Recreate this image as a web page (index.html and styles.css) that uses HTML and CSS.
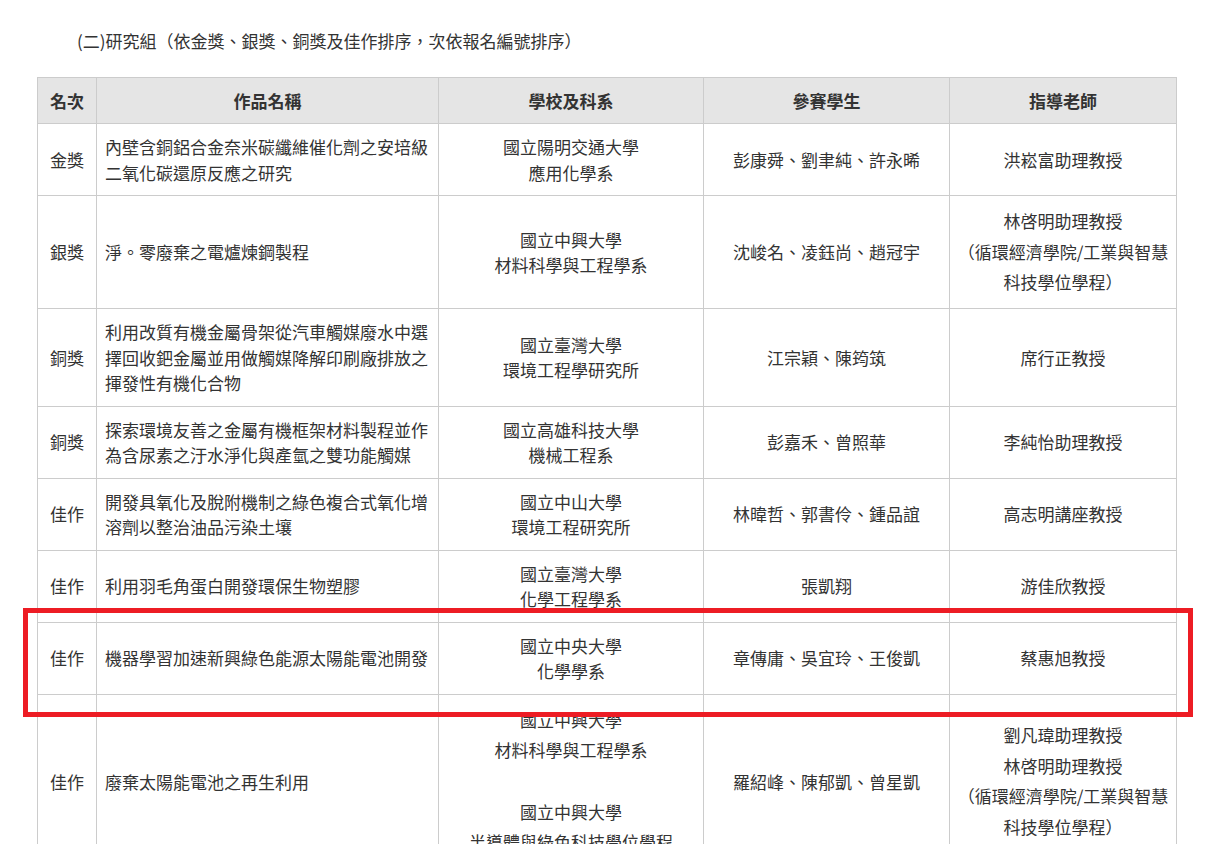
FILE: index.html
```html
<!DOCTYPE html>
<html lang="zh-Hant">
<head>
<meta charset="utf-8">
<title>研究組</title>
<link rel="stylesheet" href="styles.css">
</head>
<body>
<main class="page">
  <p class="caption">(二)研究組（依金獎、銀獎、銅獎及佳作排序，次依報名編號排序）</p>
  <div class="table-wrap">
    <table class="awards">
      <colgroup>
        <col class="c-rank"><col class="c-title"><col class="c-school"><col class="c-students"><col class="c-teacher">
      </colgroup>
      <thead>
        <tr><th>名次</th><th>作品名稱</th><th>學校及科系</th><th>參賽學生</th><th>指導老師</th></tr>
      </thead>
      <tbody>
        <tr>
          <td class="rank">金獎</td>
          <td class="title">內壁含銅鋁合金奈米碳纖維催化劑之安培級二氧化碳還原反應之研究</td>
          <td>國立陽明交通大學<br>應用化學系</td>
          <td>彭康舜、劉聿純、許永晞</td>
          <td>洪崧富助理教授</td>
        </tr>
        <tr>
          <td class="rank">銀獎</td>
          <td class="title">淨。零廢棄之電爐煉鋼製程</td>
          <td>國立中興大學<br>材料科學與工程學系</td>
          <td>沈峻名、凌鈺尚、趙冠宇</td>
          <td class="tall">林啓明助理教授<br>（循環經濟學院/工業與智慧<br>科技學位學程）</td>
        </tr>
        <tr>
          <td class="rank">銅獎</td>
          <td class="title">利用改質有機金屬骨架從汽車觸媒廢水中選擇回收鈀金屬並用做觸媒降解印刷廠排放之揮發性有機化合物</td>
          <td>國立臺灣大學<br>環境工程學研究所</td>
          <td>江宗穎、陳筠筑</td>
          <td>席行正教授</td>
        </tr>
        <tr>
          <td class="rank">銅獎</td>
          <td class="title">探索環境友善之金屬有機框架材料製程並作為含尿素之汙水淨化與產氫之雙功能觸媒</td>
          <td>國立高雄科技大學<br>機械工程系</td>
          <td>彭嘉禾、曾照華</td>
          <td>李純怡助理教授</td>
        </tr>
        <tr>
          <td class="rank">佳作</td>
          <td class="title">開發具氧化及脫附機制之綠色複合式氧化增溶劑以整治油品污染土壤</td>
          <td>國立中山大學<br>環境工程研究所</td>
          <td>林暐哲、郭書伶、鍾品誼</td>
          <td>高志明講座教授</td>
        </tr>
        <tr>
          <td class="rank">佳作</td>
          <td class="title">利用羽毛角蛋白開發環保生物塑膠</td>
          <td>國立臺灣大學<br>化學工程學系</td>
          <td>張凱翔</td>
          <td>游佳欣教授</td>
        </tr>
        <tr>
          <td class="rank">佳作</td>
          <td class="title">機器學習加速新興綠色能源太陽能電池開發</td>
          <td>國立中央大學<br>化學學系</td>
          <td>章傳庸、吳宜玲、王俊凱</td>
          <td>蔡惠旭教授</td>
        </tr>
        <tr>
          <td class="rank">佳作</td>
          <td class="title">廢棄太陽能電池之再生利用</td>
          <td class="tall">國立中興大學<br>材料科學與工程學系<br><br>國立中興大學<br>半導體與綠色科技學位學程</td>
          <td>羅紹峰、陳郁凱、曾星凱</td>
          <td class="tall">劉凡瑋助理教授<br>林啓明助理教授<br>（循環經濟學院/工業與智慧<br>科技學位學程）</td>
        </tr>
      </tbody>
    </table>
    <div class="highlight" aria-hidden="true"></div>
  </div>
</main>
</body>
</html>
```

FILE: styles.css
```css
html, body {
  margin: 0;
  padding: 0;
  background: #ffffff;
}

body {
  font-family: "Noto Sans CJK TC", "Noto Sans", sans-serif;
  font-size: 17px;
  line-height: 25.5px;
  color: #333333;
  text-spacing-trim: space-all;
}

.page {
  padding: 28px 0 40px 37px;
}

.caption {
  margin: 0 0 23px 40px;
}

.table-wrap {
  position: relative;
  width: 1140px;
}

.awards {
  width: 1140px;
  table-layout: fixed;
  border-collapse: collapse;
}

.c-rank { width: 59px; }
.c-title { width: 342px; }
.c-school { width: 265px; }
.c-students { width: 246px; }
.c-teacher { width: 227px; }

.awards th,
.awards td {
  border: 1px solid #cccccc;
  padding: 10px 8px;
  text-align: center;
  vertical-align: middle;
}

.awards th {
  background: #e5e5e5;
  font-weight: 700;
}

.awards td.title {
  text-align: left;
}

.awards td.tall {
  line-height: 30.7px;
  white-space: nowrap;
  padding-left: 2px;
  padding-right: 2px;
}

.highlight {
  position: absolute;
  left: -14px;
  top: 531px;
  width: 1160px;
  height: 99px;
  border: 5px solid #ed1c24;
  pointer-events: none;
}
```
